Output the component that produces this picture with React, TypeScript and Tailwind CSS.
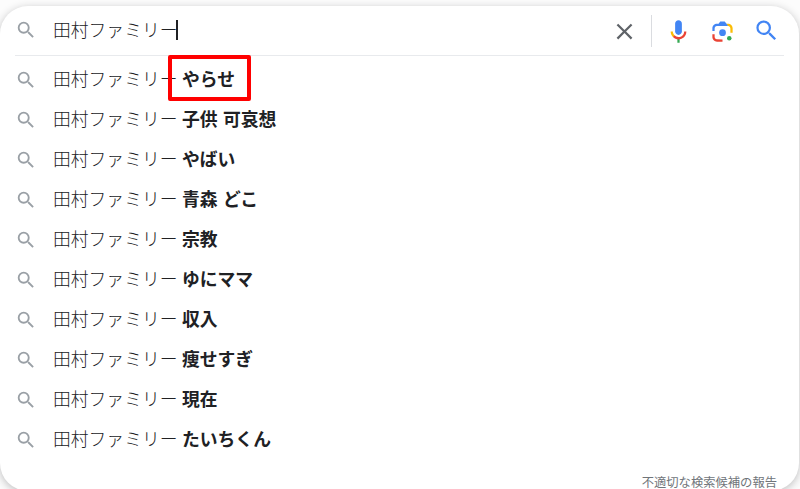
const suggestions = [
  'やらせ',
  '子供 可哀想',
  'やばい',
  '青森 どこ',
  '宗教',
  'ゆにママ',
  '収入',
  '痩せすぎ',
  '現在',
  'たいちくん',
];

const SEARCH_PATH =
  'M15.5 14h-.79l-.28-.27A6.471 6.471 0 0 0 16 9.5 6.5 6.5 0 1 0 9.5 16c1.61 0 3.09-.59 4.23-1.57l.27.28v.79l5 4.99L20.49 19l-4.99-5zm-6 0C7.01 14 5 11.99 5 9.5S7.01 5 9.5 5 14 7.01 14 9.5 11.99 14 9.5 14z';

function SearchIcon({ className }: { className: string }) {
  return (
    <svg viewBox="0 0 24 24" fill="currentColor" className={className}>
      <path d={SEARCH_PATH} />
    </svg>
  );
}

function ClearIcon() {
  return (
    <svg viewBox="0 0 24 24" fill="currentColor" className="size-[27px] shrink-0 text-[#5f6368]">
      <path d="M19 6.41L17.59 5 12 10.59 6.41 5 5 6.41 10.59 12 5 17.59 6.41 19 12 13.41 17.59 19 19 17.59 13.41 12z" />
    </svg>
  );
}

function MicIcon() {
  return (
    <svg viewBox="0 0 24 24" className="ml-[13px] size-[27px] shrink-0">
      <path fill="#4285f4" d="m12 15c1.66 0 3-1.31 3-2.97v-7.02c0-1.66-1.34-3.01-3-3.01s-3 1.34-3 3.01v7.02c0 1.66 1.34 2.97 3 2.97z" />
      <path fill="#34a853" d="m11 18.08h2v3.92h-2z" />
      <path fill="#fbbc04" d="m7.05 16.87c-1.27-1.33-2.05-2.83-2.05-4.87h2c0 1.45 0.56 2.42 1.47 3.38v0.32l-1.15 1.18z" />
      <path fill="#ea4335" d="m12 16.93a4.97 5.25 0 0 1-3.54-1.55l-1.41 1.49c1.26 1.34 3.02 2.13 4.95 2.13 3.87 0 6.99-2.92 6.99-7h-1.99c0 2.92-2.24 4.93-5 4.93z" />
    </svg>
  );
}

function LensIcon() {
  return (
    <svg viewBox="0 0 192 192" className="ml-[17px] size-[27px] shrink-0">
      <circle fill="#34a853" cx="144.07" cy="144" r="16" />
      <circle fill="#4285f4" cx="96.07" cy="104" r="24" />
      <path fill="#ea4335" d="M24,135.2c0,18.11,14.69,32.8,32.8,32.8H96v-16l-40.1-0.1c-8.8,0-15.9-8.19-15.9-17.9v-18H24V135.2z" />
      <path fill="#fbbc04" d="M168,72.8c0-18.11-14.69-32.8-32.8-32.8H116l20,16c8.8,0,16,8.29,16,18v30h16V72.8z" />
      <path fill="#4285f4" d="M112,24l-32,0L68,40H56.8C38.69,40,24,54.69,24,72.8V92h16V74c0-9.71,7.2-18,16-18h80L112,24z" />
    </svg>
  );
}

export default function App() {
  return (
    <div className="h-[489px] w-[800px] overflow-hidden bg-[#fcfcfc] pt-[6px] font-['Noto_Sans_CJK_JP',sans-serif] text-[17.8px] text-[#202124]">
      <div className="flex h-[485px] w-[799px] flex-col rounded-[28px] bg-white shadow-[0_2px_9px_rgba(32,33,36,0.28)]">
        <div className="mx-[15px] flex h-[50px] shrink-0 items-center border-b border-[#e8eaed]">
          <SearchIcon className="mb-[2px] size-[22px] shrink-0 text-[#9aa0a6]" />
          <div className="mb-[4px] ml-[16px] flex items-center whitespace-nowrap font-light">
            <span className="w-[123px] leading-6">田村ファミリー</span>
            <span className="mt-[2px] h-5 w-[1.5px] bg-[#202124]" />
          </div>
          <div className="mt-px mr-[4px] ml-auto flex items-center">
            <ClearIcon />
            <span className="ml-[13px] h-8 w-px bg-[#dadce0]" />
            <MicIcon />
            <LensIcon />
            <SearchIcon className="mb-px ml-[17px] size-[27px] shrink-0 text-[#4285f4]" />
          </div>
        </div>
        <ul className="mt-[4px]">
          {suggestions.map((word, i) => (
            <li key={word} className="flex h-10 items-center pl-[15px] whitespace-nowrap">
              <SearchIcon className="size-[22px] shrink-0 text-[#9aa0a6]" />
              <span className="mb-[4px] ml-[16px] w-[129px] leading-6 font-light">田村ファミリー</span>
              <span className="relative mb-[4px] leading-6 font-bold [word-spacing:1.3px]">
                {word}
                {i === 0 && (
                  <span className="absolute -top-[11px] -left-[14px] h-[46px] w-[83px] rounded-[2px] border-4 border-[#ff0000]" />
                )}
              </span>
            </li>
          ))}
        </ul>
        <div className="mt-[15px] mr-[22px] text-right text-[12.3px] leading-[14px] text-[#70757a]">
          不適切な検索候補の報告
        </div>
      </div>
    </div>
  );
}
